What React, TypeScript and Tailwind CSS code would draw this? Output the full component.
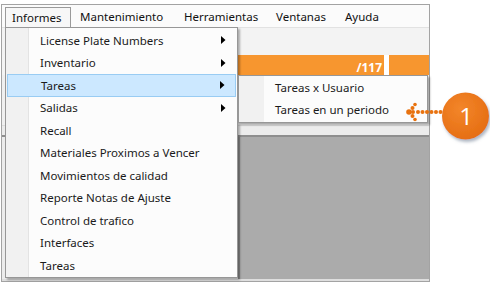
const mainItems = [
  { label: "License Plate Numbers", sub: true },
  { label: "Inventario", sub: true },
  { label: "Tareas", sub: true, active: true },
  { label: "Salidas", sub: true },
  { label: "Recall" },
  { label: "Materiales Proximos a Vencer" },
  { label: "Movimientos de calidad" },
  { label: "Reporte Notas de Ajuste" },
  { label: "Control de trafico" },
  { label: "Interfaces" },
  { label: "Tareas" },
];

function Arrow() {
  return (
    <svg width="5" height="8" viewBox="0 0 5 8" className="block">
      <path d="M0 0 L4.5 4 L0 8 Z" fill="#000" />
    </svg>
  );
}

function Callout() {
  return (
    <svg width="90" height="60" viewBox="0 0 90 60" className="absolute left-[400px] top-[85px]">
      <defs>
        <radialGradient id="g1" cx="40%" cy="35%" r="70%">
          <stop offset="0%" stopColor="#f3862a" />
          <stop offset="100%" stopColor="#e56d12" />
        </radialGradient>
        <filter id="sh" x="-30%" y="-30%" width="160%" height="160%">
          <feDropShadow dx="1.5" dy="2.5" stdDeviation="1.6" floodColor="#6b7a90" floodOpacity="0.55" />
        </filter>
      </defs>
      {/* puntos del indicador */}
      {[18, 22.5, 27, 31.5, 36, 40.5].map((x) => (
        <circle key={x} cx={x} cy="27" r="2" fill="#e8720f" />
      ))}
      <circle cx="9" cy="27" r="2.8" fill="#e8720f" />
      <circle cx="12.5" cy="23" r="2" fill="#e8720f" />
      <circle cx="15" cy="19.5" r="1.8" fill="#e8720f" />
      <circle cx="12.5" cy="31" r="2" fill="#e8720f" />
      <circle cx="15" cy="34.5" r="1.8" fill="#e8720f" />
      <circle cx="13" cy="27" r="2" fill="#e8720f" />
      <circle cx="65.5" cy="31" r="23.5" fill="url(#g1)" filter="url(#sh)" />
      <text
        x="66"
        y="39.5"
        textAnchor="middle"
        fontSize="24"
        fill="#fff"
        fontFamily="'Open Sans', 'Noto Sans', sans-serif"
      >
        1
      </text>
    </svg>
  );
}

export default function App() {
  return (
    <div className="relative w-[490px] h-[285px] bg-white overflow-hidden font-['Noto_Sans',sans-serif] text-[11.5px] text-[#1a1a1a]">
      {/* ventana */}
      <div className="ml-[1px] mt-[4px] w-[429px] h-[278px] border border-[#a3a3a3] flex flex-col bg-[#f4f4f4]">
        {/* barra de menu */}
        <div className="h-[22px] bg-[#fbfbfb] flex items-end text-[#111] pl-[1px]">
          <div className="ml-[2px] w-[66px] h-[20px] border border-b-0 border-[#9a9a9a] bg-[#f7f7f7] pl-[6px] flex items-center">
            Informes
          </div>
          <div className="w-[104px] h-[20px] pl-[9px] flex items-center">Mantenimiento</div>
          <div className="w-[92px] h-[20px] pl-[9px] flex items-center">Herramientas</div>
          <div className="w-[69px] h-[20px] pl-[9px] flex items-center">Ventanas</div>
          <div className="h-[20px] pl-[9px] flex items-center">Ayuda</div>
        </div>

        {/* barra de herramientas */}
        <div className="h-[28px] bg-[#f3f3f3] border-t border-[#e2e2e2]" />

        {/* fila naranja */}
        <div className="h-[20px] flex">
          <div className="w-[236px] bg-[#f4f4f4]" />
          <div className="flex-1 bg-[#f7962f] flex justify-end items-end pr-[2px]">
            <span className="text-white font-bold text-[12px] leading-[14px]">/117</span>
          </div>
          <div className="w-[5px] bg-white" />
          <div className="w-[40px] bg-[#f7962f]" />
        </div>

        <div className="h-[50px] bg-[#f0f0f0]" />
        <div className="h-[10px] bg-[#ececec] border-t border-[#dcdcdc]" />

        {/* area gris */}
        <div className="flex-1 flex border-t-2 border-[#8e8e8e]">
          <div className="w-[236px] bg-[#ececec]" />
          <div className="flex-1 bg-[#ababab] border-l-2 border-[#8a8a8a]" />
        </div>
        <div className="h-[2px] bg-[#dedede]" />
      </div>

      {/* menu desplegable Informes */}
      <div className="absolute left-[5px] top-[27px] w-[233px] h-[251px] border border-[#979797] bg-[#fcfcfc] shadow-[2px_2px_2px_rgba(0,0,0,0.3)] pt-[1px] px-[1px]">
        <div className="absolute left-0 top-0 bottom-0 w-[23px] bg-[#f1f1f1] border-r border-[#e3e3e3]" />
        {mainItems.map((it, i) => (
          <div
            key={i}
            className={
              "relative h-[22.5px] flex items-center pl-[33px] pr-[10px] " +
              (it.active ? "bg-[#cce8ff] border border-[#99ccf3] pl-[32px] pr-[9px]" : "")
            }
          >
            <span className="flex-1">{it.label}</span>
            {it.sub && <Arrow />}
          </div>
        ))}
      </div>

      {/* submenu Tareas */}
      <div className="absolute left-[238px] top-[75px] w-[190px] h-[48px] border border-[#979797] bg-[#fcfcfc] shadow-[2px_2px_2px_rgba(0,0,0,0.3)] pt-[1px]">
        <div className="absolute left-0 top-0 bottom-0 w-[25px] bg-[#f1f1f1]" />
        <div className="relative h-[22px] flex items-center pl-[36px]">Tareas x Usuario</div>
        <div className="relative h-[22px] flex items-center pl-[36px]">Tareas en un periodo</div>
      </div>

      <Callout />
    </div>
  );
}
